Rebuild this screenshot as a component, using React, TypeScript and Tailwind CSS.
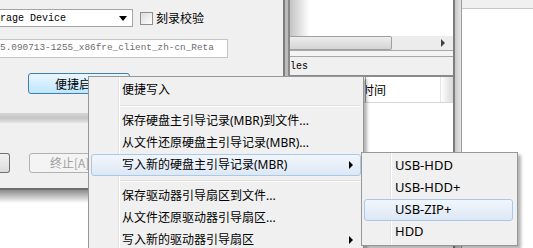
import clsx from "clsx";

const menuFont = "font-['Noto_Sans','Noto_Sans_CJK_SC',sans-serif]";

function Arrow() {
  return <span className="ml-auto mr-[7px] h-0 w-0 border-y-[4px] border-l-[4px] border-y-transparent border-l-black" />;
}

function MenuItem({ label, active, sub }: { label: string; active?: boolean; sub?: boolean }) {
  return (
    <div
      className={clsx(
        "mx-[2px] flex h-[22px] items-center rounded-[3px] border",
        active ? "border-[#a9c9ea] bg-gradient-to-b from-[#f1f6fc] to-[#dde8f5]" : "border-transparent"
      )}
    >
      <span className="pl-[30px] whitespace-nowrap">{label}</span>
      {sub && <Arrow />}
    </div>
  );
}

function Sep() {
  return (
    <div className="flex h-[9px] items-center">
      <div className="ml-[31px] mr-[2px] h-[2px] flex-1 border-t border-b border-t-[#e0e0e0] border-b-white" />
    </div>
  );
}

function ContextMenu() {
  return (
    <div
      className={clsx(
        "absolute left-[88px] top-[76px] h-[190px] w-[276px] border border-[#979797] py-[2px] text-[12px] text-black shadow-[3px_3px_3px_rgba(0,0,0,0.3)]",
        "bg-[linear-gradient(to_right,#f0f0f0_29px,#e2e3e3_29px,#e2e3e3_30px,#ffffff_30px,#ffffff_31px,#f0f0f0_31px)]",
        menuFont
      )}
    >
      <MenuItem label="便捷写入" />
      <Sep />
      <MenuItem label="保存硬盘主引导记录(MBR)到文件..." />
      <MenuItem label="从文件还原硬盘主引导记录(MBR)..." />
      <MenuItem label="写入新的硬盘主引导记录(MBR)" active sub />
      <Sep />
      <MenuItem label="保存驱动器引导扇区到文件..." />
      <MenuItem label="从文件还原驱动器引导扇区..." />
      <MenuItem label="写入新的驱动器引导扇区" sub />
    </div>
  );
}

function SubMenu() {
  const items = ["USB-HDD", "USB-HDD+", "USB-ZIP+", "HDD"];
  return (
    <div
      className={clsx(
        "absolute left-[361px] top-[152px] w-[157px] border border-[#979797] py-[2px] pr-[2px] text-[13px] text-black shadow-[3px_3px_3px_rgba(0,0,0,0.3)]",
        "bg-[linear-gradient(to_right,#f0f0f0_28px,#e2e3e3_28px,#e2e3e3_29px,#ffffff_29px,#ffffff_30px,#f0f0f0_30px)]",
        menuFont
      )}
    >
      {items.map((t) => (
        <MenuItem key={t} label={t} active={t === "USB-ZIP+"} />
      ))}
    </div>
  );
}

function LeftDialog() {
  return (
    <div className="flex w-[290px] flex-col">
      <div className="flex h-[188px]">
        <div className="flex w-[283px] flex-col bg-[#f0f0f0] font-['Noto_Sans_CJK_SC',sans-serif] text-[12px]">
          {/* device combo + verify checkbox */}
          <div className="mt-[9px] flex h-[18px] items-center">
            <div className="flex h-[18px] w-[133px] items-center border-y border-r border-[#a5a5a5] bg-white">
              <span className="font-['Liberation_Mono',monospace] text-[10px] text-black">rage Device</span>
              <span className="ml-auto mr-[5px] h-0 w-0 border-x-[4px] border-t-[5px] border-x-transparent border-t-black" />
            </div>
            <div className="ml-[7px] h-[13px] w-[13px] border border-[#8e8f8f] bg-gradient-to-br from-[#dcdcdc] to-white" />
            <span className="ml-[3px] text-black">刻录校验</span>
          </div>
          {/* image path */}
          <div className="mt-[12px] flex h-[19px] w-[228px] items-center border-y border-r border-[#c2c4c8] bg-white">
            <span className="whitespace-nowrap font-['Liberation_Mono',monospace] text-[9.4px] text-[#6d6d6d]">
              5.090713-1255_x86fre_client_zh-cn_Reta
            </span>
          </div>
          {/* quick boot button */}
          <div className="ml-[28px] mt-[15px] flex h-[21px] w-[102px] items-center justify-center rounded-[3px] border border-[#3c7fb1] bg-gradient-to-b from-[#eaf6fd] to-[#bee6fd] text-black">
            便捷启动
          </div>
          {/* progress bar */}
          <div className="mt-[19px] h-[10px] bg-gradient-to-b from-[#d6d6d6] via-[#c4c4c4] to-[#e6e6e6]" />
          {/* bottom buttons */}
          <div className="mt-[30px] flex h-[20px]">
            <div className="w-[10px] rounded-r-[3px] border-y border-r border-[#707070] bg-gradient-to-b from-[#f2f2f2] to-[#dcdcdc]" />
            <div className="ml-[19px] flex w-[80px] items-center rounded-[3px] border border-[#adb2b5] bg-[#f4f4f4] pl-[20px] text-[#a0a0a0]">
              终止[A]
            </div>
          </div>
        </div>
        <div className="flex w-[7px]">
          <div className="w-[2px] bg-[#7d7d7d]" />
          <div className="w-[3px] bg-[#bcbcbc]" />
          <div className="w-[2px] bg-[#8a8a8a]" />
        </div>
      </div>
      <div className="h-[2px] bg-[#6e6e6e]" />
      <div className="h-[13px] bg-gradient-to-b from-[#8c8c8c] to-white" />
      <div className="flex-1 bg-white" />
    </div>
  );
}

function MiddlePane() {
  return (
    <div className="flex w-[165px]">
      <div className="flex w-[163px] flex-col">
        <div className="h-[36px] bg-gradient-to-r from-[#c4c4c4] via-white via-[12%] to-white" />
        {/* horizontal scrollbar */}
        <div className="flex h-[14px] items-center bg-[#ececec]">
          <div className="h-[14px] w-[102px] rounded-r-[2px] border-y border-r border-[#a0a0a0] bg-gradient-to-b from-[#eeeeee] to-[#d4d4d4]" />
          <span className="ml-auto mr-[8px] h-0 w-0 border-y-[4px] border-l-[4px] border-y-transparent border-l-[#404040]" />
        </div>
        <div className="h-[7px] border-y border-[#a8a8a8] bg-[#f4f4f4]" />
        <div className="flex h-[18px] items-center bg-[#f0f0f0] font-['Liberation_Mono',monospace] text-[10px] text-black">
          <span>les</span>
        </div>
        <div className="h-[2px] bg-[#8a8a8a]" />
        {/* list header */}
        <div className="flex h-[26px] border-b border-[#d5d5d5] bg-white font-['Noto_Sans_CJK_SC',sans-serif] text-[12px]">
          <div className="w-[76px] border-r border-[#a0a0a0]" />
          <div className="flex w-[74px] items-center overflow-hidden text-black">
            <span className="-ml-[4px] whitespace-nowrap">时间</span>
          </div>
          <div className="flex-1 border-l border-[#e5e5e5] bg-gradient-to-r from-white to-[#d8d8d8]" />
        </div>
        <div className="flex-1 bg-white" />
      </div>
      <div className="w-[2px] bg-[#7d7d7d]" />
    </div>
  );
}

function RightPane() {
  return (
    <div className="flex flex-1">
      <div className="w-[6px] bg-gradient-to-r from-[#c8c8c8] to-[#e6e6e6]" />
      <div className="w-px bg-[#9a9a9a]" />
      <div className="flex flex-1 flex-col">
        <div className="h-[9px] border-b border-[#c9c9c9] bg-[#f0f0f0]" />
        <div className="flex-1 bg-white" />
      </div>
    </div>
  );
}

export default function App() {
  return (
    <div className="relative flex h-[248px] w-[533px] overflow-hidden bg-white">
      <LeftDialog />
      <MiddlePane />
      <RightPane />
      <ContextMenu />
      <SubMenu />
    </div>
  );
}
